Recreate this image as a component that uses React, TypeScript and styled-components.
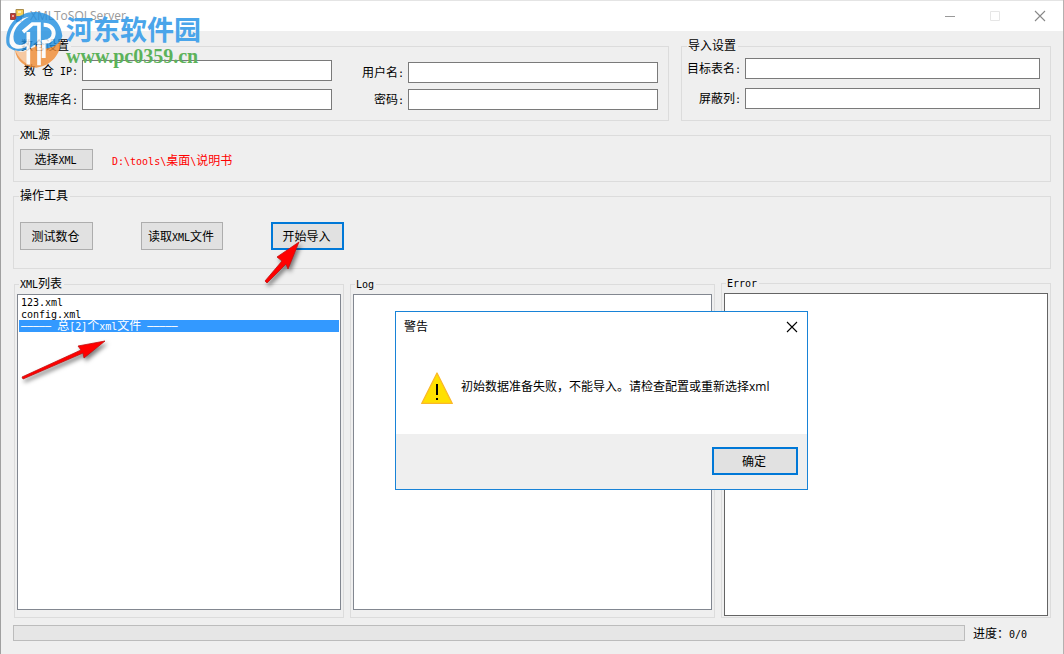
import React from "react";
import styled, { createGlobalStyle, css } from "styled-components";

const GlobalStyle = createGlobalStyle`
  *, *::before, *::after { box-sizing: border-box; }
  body {
    margin: 0;
    background: #efefef;
    color: #000;
    font: 12px/14px "Liberation Sans", "Noto Sans CJK SC", sans-serif;
  }
  button, input, textarea { font: inherit; color: inherit; }
`;

const Window = styled.div`
  position: relative;
  display: flex;
  flex-direction: column;
  min-height: 100vh;
  background: #efefef;
  border-left: 1px solid #a0a0a0;
  border-right: 1px solid #b4b0b0;
`;

const TitleBar = styled.header`
  display: flex;
  align-items: center;
  height: 31px;
  padding: 0 15px 0 9px;
  background: #fff;
  border-top: 1px solid #e4e4e4;
`;

const AppTitle = styled.h1`
  flex: 1;
  margin: 0 0 0 6px;
  font: 12px/16px "Open Sans", "Noto Sans CJK SC", sans-serif;
  color: #999;
`;

const CaptionButtons = styled.div`
  display: flex;
  gap: 29px;
`;

const CaptionButton = styled.button<{ $tone: string }>`
  display: flex;
  align-items: center;
  justify-content: center;
  width: 16px;
  height: 16px;
  padding: 0;
  border: 0;
  background: none;
  color: ${(p) => p.$tone};
`;

const Client = styled.main`
  flex: 1;
  display: flex;
  flex-direction: column;
  gap: 8px;
  padding: 9px 12px 13px;
`;

const SettingsRow = styled.div`
  display: flex;
  align-items: stretch;
  gap: 12px;
  margin-left: 1px;
`;

const Group = styled.fieldset<{ $grow?: number }>`
  display: flex;
  flex: ${(p) => (p.$grow ? `${p.$grow} 1 0` : "none")};
  min-width: 0;
  margin: 0;
  padding: 0;
  border: 1px solid #dcdcdc;
`;

const Legend = styled.legend`
  height: 13px;
  margin-left: 5px;
  padding: 0 2px 0 1px;
  line-height: 13px;
`;

const Mono = styled.span`
  font: 10px/12px "DejaVu Sans Mono", monospace;
`;

const Fields = styled.div<{ $grow: number; $gap: number; $top: number }>`
  flex: ${(p) => p.$grow} 1 0;
  display: flex;
  flex-direction: column;
  gap: ${(p) => p.$gap}px;
  padding: ${(p) => p.$top}px 0 10px;
`;

const SettingsGroup = styled(Group)`
  padding-right: 10px;
`;

const Field = styled.label<{ $label: number }>`
  display: grid;
  grid-template-columns: ${(p) => p.$label}px 1fr;
  align-items: center;
  column-gap: 4px;
  text-align: right;
  white-space: pre;
`;

const TextBox = styled.input`
  width: 100%;
  height: 21px;
  padding: 0 3px;
  border: 1px solid #7a7a7a;
  border-radius: 0;
  background: #fff;
`;

const Tools = styled.div<{ $pad: string; $gap: number }>`
  display: flex;
  align-items: center;
  gap: ${(p) => p.$gap}px;
  padding: ${(p) => p.$pad};
`;

const focused = css`
  border: 2px solid #0078d7;
`;

const PushButton = styled.button<{ $width: number; $height: number; $focused?: boolean }>`
  width: ${(p) => p.$width}px;
  height: ${(p) => p.$height}px;
  padding: 1px 2px 0 0;
  border: 1px solid #adadad;
  border-radius: 0;
  background: #e1e1e1;
  line-height: 14px;
  ${(p) => p.$focused && focused}
`;

const Path = styled.output`
  padding-top: 2px;
  color: #f00;
`;

const Lists = styled.div`
  flex: 1;
  display: flex;
  align-items: stretch;
  gap: 6px;
  margin: 1px 0 -1px 1px;
`;

const ListGroup = styled(Group)`
  padding: 3px 2px 7px;
`;

const ErrorGroup = styled(Group)`
  margin-top: -1px;
  padding: 3px 2px 1px;
`;

const ListLegend = styled(Legend)`
  margin-left: 2px;
`;

const ListBox = styled.ul`
  flex: 1;
  margin: 0;
  padding: 1px;
  list-style: none;
  background: #fff;
  border: 1px solid #828790;
`;

const ListItem = styled.li<{ $selected?: boolean }>`
  height: 12px;
  padding-left: 2px;
  line-height: 12px;
  white-space: pre;
  background: ${(p) => (p.$selected ? "#3399ff" : "transparent")};
  color: ${(p) => (p.$selected ? "#fff" : "#000")};
`;

const TextArea = styled.textarea<{ $border: string }>`
  flex: 1;
  min-width: 0;
  padding: 2px;
  resize: none;
  border: 1px solid ${(p) => p.$border};
  border-radius: 0;
  background: #fff;
`;

const StatusRow = styled.footer`
  display: flex;
  align-items: center;
  gap: 8px;
  height: 16px;
`;

const ProgressTrack = styled.div`
  flex: 1;
  height: 16px;
  border: 1px solid #bcbcbc;
  background: #e6e6e6;
`;

const ProgressText = styled.span`
  width: 78px;
  padding-top: 2px;
  white-space: nowrap;
`;

const Dialog = styled.section`
  position: absolute;
  left: 394px;
  top: 311px;
  width: 413px;
  display: flex;
  flex-direction: column;
  border: 1px solid #1883d7;
  background: #fff;
  font-family: "Open Sans", "Noto Sans CJK SC", sans-serif;
`;

const DialogHeader = styled.div`
  display: flex;
  align-items: center;
  justify-content: space-between;
  height: 29px;
  padding: 0 7px 0 8px;
`;

const DialogTitle = styled.h2`
  margin: 0;
  font-size: 12px;
  font-weight: 400;
  line-height: 14px;
`;

const DialogBody = styled.div`
  display: flex;
  align-items: center;
  gap: 8px;
  height: 93px;
  padding: 0 25px 0;
  white-space: nowrap;
`;

const Message = styled.p`
  margin: 0 0 2px;
`;

const DialogFooter = styled.div`
  display: flex;
  justify-content: flex-end;
  padding: 13px 9px 14px;
  background: #efefef;
`;

const Watermark = styled.div`
  position: absolute;
  left: 4px;
  top: 10px;
  display: flex;
  pointer-events: none;

  svg { opacity: 0.8; }
`;

const WatermarkText = styled.div`
  display: flex;
  flex-direction: column;
  margin-left: 2px;
  padding-top: 2px;
`;

const SiteName = styled.span`
  font: 700 27px/34px "Noto Sans CJK SC", sans-serif;
  color: #4aa5ea;
`;

const SiteUrl = styled.span`
  font: 700 20px/20px "Liberation Serif", serif;
  color: #5cb25a;
`;

const Arrow = styled.svg<{ $x: number; $y: number }>`
  position: absolute;
  left: ${(p) => p.$x}px;
  top: ${(p) => p.$y}px;
  overflow: visible;
  pointer-events: none;
  filter: drop-shadow(2px 3px 2px rgba(0, 0, 0, 0.5));
`;

const AppIcon = () => (
  <svg width="14" height="14" viewBox="0 0 14 14" aria-hidden="true">
    <path d="M6 .5h7.500v7H6z" fill="#f7cf52" stroke="#a88c4c" />
    <path d="M.5 4.500h5v6h-5z" fill="#c43a32" stroke="#8d4a45" />
    <path d="M6.500 7.500h5v5h-5z" fill="#4b82d8" stroke="#5a76a8" />
    <path d="M2 6h2v2H2zM8 2h3v2H8z" fill="#fff" opacity=".55" />
  </svg>
);

const CloseIcon = () => (
  <svg width="12" height="12" viewBox="0 0 12 12" aria-hidden="true">
    <path d="M1 1l10 10M11 1L1 11" stroke="currentColor" strokeWidth="1.1" />
  </svg>
);

const WarningIcon = () => (
  <svg width="32" height="32" viewBox="0 0 32 32" role="img" aria-label="警告">
    <path d="M16 1L31.300 31.500H.7z" fill="#ffe000" stroke="#fbb829" strokeWidth="1.3" strokeLinejoin="round" />
    <path d="M15 12h2v11h-2zM15 26h2v2h-2z" fill="#000" />
  </svg>
);

const SiteLogo = () => (
  <svg width="59" height="58" viewBox="12 30 177 174" aria-hidden="true">
    <path
      d="M42 150C62 162 76 156 84 148L178 112C186 150 158 198 106 203C72 202 46 184 42 150Z"
      fill="#f18a30"
    />
    <path
      d="M16 128C12 78 50 36 100 36C148 36 180 66 184 108C180 128 158 146 128 146V134H100C84 150 50 160 30 146C22 142 17 136 16 128Z"
      fill="#1f8ee0"
    />
    <path
      d="M26 130C22 90 48 56 84 50C50 68 34 94 38 118C42 142 66 138 84 122V136C64 150 34 152 26 130Z"
      fill="#fff"
    />
    <path d="M42 150C52 172 66 186 80 192V150C66 158 54 158 42 150Z" fill="#f8c090" />
    <g fill="none" stroke="#fff">
      <path d="M82 96V194" strokeWidth="11" />
      <path d="M66 96L94 72H114V196" strokeWidth="11" />
      <path d="M128 74C168 74 168 126 128 126V174" strokeWidth="12" />
    </g>
  </svg>
);

export default function App() {
  return (
    <>
      <GlobalStyle />
      <Window>
        <TitleBar>
          <AppIcon />
          <AppTitle>XMLToSQLServer</AppTitle>
          <CaptionButtons>
            <CaptionButton $tone="#999" aria-label="最小化">
              <svg width="10" height="10" viewBox="0 0 10 10" aria-hidden="true">
                <path d="M0 5.500h10" stroke="currentColor" />
              </svg>
            </CaptionButton>
            <CaptionButton $tone="#e6e6e6" aria-label="最大化" disabled>
              <svg width="10" height="10" viewBox="0 0 10 10" aria-hidden="true">
                <path d="M.5.5h9v9h-9z" fill="none" stroke="currentColor" />
              </svg>
            </CaptionButton>
            <CaptionButton $tone="#888" aria-label="关闭">
              <CloseIcon />
            </CaptionButton>
          </CaptionButtons>
        </TitleBar>

        <Client>
          <SettingsRow>
            <SettingsGroup $grow={643}>
              <Legend>数仓设置</Legend>
              <Fields $grow={317} $gap={8} $top={7}>
                <Field $label={63}>
                  <span>数<Mono> </Mono>仓<Mono> IP:</Mono></span>
                  <TextBox />
                </Field>
                <Field $label={63}>
                  <span>数据库名<Mono>:</Mono></span>
                  <TextBox />
                </Field>
              </Fields>
              <Fields $grow={326} $gap={6} $top={9}>
                <Field $label={72}>
                  <span>用户名<Mono>:</Mono></span>
                  <TextBox />
                </Field>
                <Field $label={72}>
                  <span>密码<Mono>:</Mono></span>
                  <TextBox type="password" />
                </Field>
              </Fields>
            </SettingsGroup>
            <SettingsGroup $grow={358}>
              <Legend>导入设置</Legend>
              <Fields $grow={1} $gap={9} $top={5}>
                <Field $label={59}>
                  <span>目标表名<Mono>:</Mono></span>
                  <TextBox />
                </Field>
                <Field $label={59}>
                  <span>屏蔽列<Mono>:</Mono></span>
                  <TextBox />
                </Field>
              </Fields>
            </SettingsGroup>
          </SettingsRow>

          <Group>
            <Legend><Mono>XML</Mono>源</Legend>
            <Tools $pad="7px 6px 11px" $gap={19}>
              <PushButton $width={73} $height={21}>选择<Mono>XML</Mono></PushButton>
              <Path><Mono>D:\tools\</Mono>桌面<Mono>\</Mono>说明书</Path>
            </Tools>
          </Group>

          <Group>
            <Legend>操作工具</Legend>
            <Tools $pad="19px 6px 18px" $gap={48}>
              <PushButton $width={73} $height={28}>测试数仓</PushButton>
              <PushButton $width={82} $height={28}>读取<Mono>XML</Mono>文件</PushButton>
              <PushButton $width={73} $height={28} $focused>开始导入</PushButton>
            </Tools>
          </Group>

          <Lists>
            <ListGroup $grow={324}>
              <ListLegend><Mono>XML</Mono>列表</ListLegend>
              <ListBox>
                <ListItem><Mono>123.xml</Mono></ListItem>
                <ListItem><Mono>config.xml</Mono></ListItem>
                <ListItem $selected>
                  <Mono>───── </Mono>总<Mono>[2]</Mono>个<Mono>xml</Mono>文件<Mono> ─────</Mono>
                </ListItem>
              </ListBox>
            </ListGroup>
            <ListGroup $grow={359}>
              <ListLegend><Mono>Log</Mono></ListLegend>
              <TextArea $border="#828790" aria-label="Log" readOnly />
            </ListGroup>
            <ErrorGroup $grow={324}>
              <ListLegend><Mono>Error</Mono></ListLegend>
              <TextArea $border="#646464" aria-label="Error" readOnly />
            </ErrorGroup>
          </Lists>

          <StatusRow>
            <ProgressTrack role="progressbar" aria-label="进度" aria-valuenow={0} />
            <ProgressText>进度：<Mono>0/0</Mono></ProgressText>
          </StatusRow>
        </Client>

        <Arrow $x={263} $y={242} width="36" height="42" viewBox="0 0 36 42" aria-hidden="true">
          <path d="M35 0L13 15L18 19L1 39L3 41L22 22L24 27Z" fill="#f00" stroke="#c01010" strokeWidth=".8" />
        </Arrow>
        <Arrow $x={20} $y={340} width="86" height="40" viewBox="0 0 86 40" aria-hidden="true">
          <path d="M84 1L57 6L60 10L1 37L2 39L62 13L63 18Z" fill="#f00" stroke="#c01010" strokeWidth=".8" />
        </Arrow>

        <Dialog role="dialog" aria-labelledby="warning-title">
          <DialogHeader>
            <DialogTitle id="warning-title">警告</DialogTitle>
            <CaptionButton $tone="#000" aria-label="关闭">
              <CloseIcon />
            </CaptionButton>
          </DialogHeader>
          <DialogBody>
            <WarningIcon />
            <Message>初始数据准备失败，不能导入。请检查配置或重新选择xml</Message>
          </DialogBody>
          <DialogFooter>
            <PushButton $width={86} $height={28} $focused>确定</PushButton>
          </DialogFooter>
        </Dialog>

        <Watermark>
          <SiteLogo />
          <WatermarkText>
            <SiteName>河东软件园</SiteName>
            <SiteUrl>www.pc0359.cn</SiteUrl>
          </WatermarkText>
        </Watermark>
      </Window>
    </>
  );
}
